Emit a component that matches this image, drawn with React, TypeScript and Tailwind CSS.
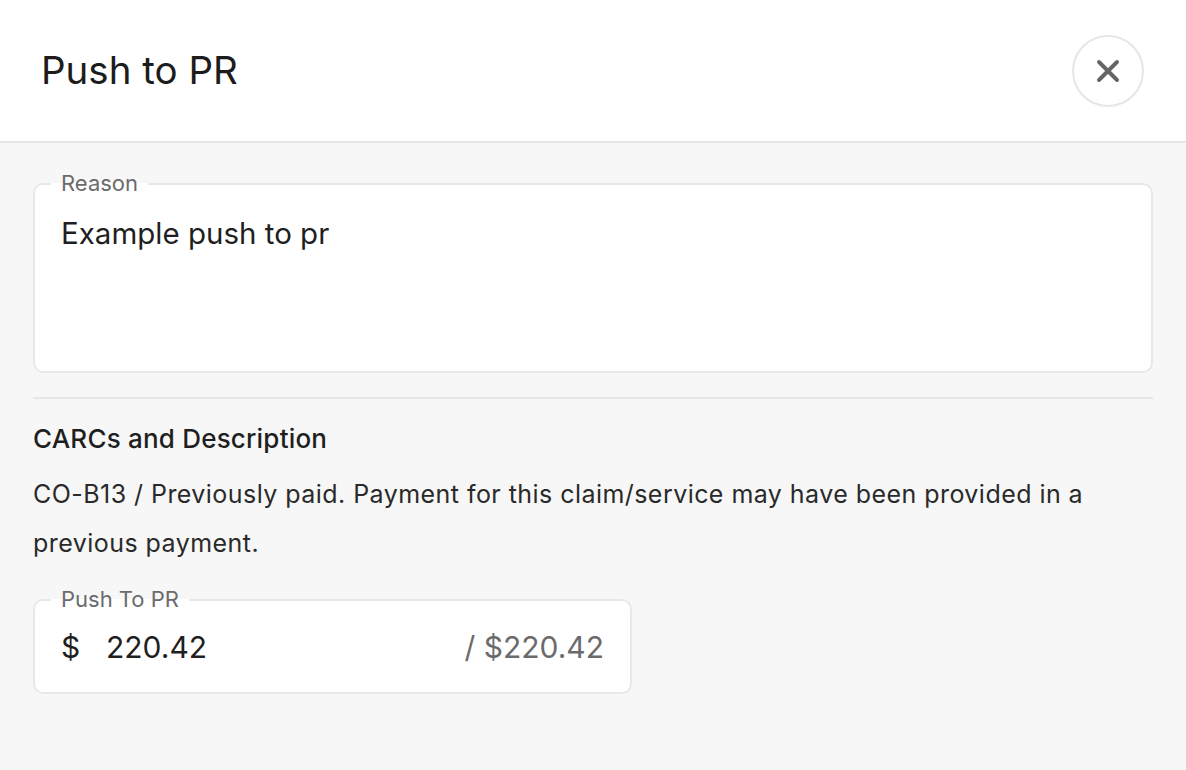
import { X } from 'lucide-react';

export default function App() {
  return (
    <div
      className="min-h-screen w-full bg-[#f7f7f7] text-[#1f1f1f]"
      style={{ fontFamily: 'Inter, "Noto Sans", sans-serif' }}
    >
      {/* Header */}
      <div className="h-[143px] bg-white border-b-2 border-[#e6e6e6] flex items-center justify-between pl-[41px] pr-[42px]">
        <h1 className="text-[38.5px] font-normal text-[#1c1c1c]">Push to PR</h1>
        <button className="w-[72px] h-[72px] rounded-full border-2 border-[#e6e6e6] flex items-center justify-center text-[#666666]">
          <X size={36} strokeWidth={2.6} />
        </button>
      </div>

      {/* Body */}
      <div className="px-[33px] pt-[24px]">
        <fieldset className="border-2 border-[#e8e8e8] rounded-[10px] bg-white h-[206px] px-[26px] pt-[13px]">
          <legend className="px-[10px] -ml-[10px] text-[22px] leading-[33px] text-[#6b6b6b]">Reason</legend>
          <div className="text-[29.5px] text-[#1f1f1f] leading-[40px]">Example push to pr</div>
        </fieldset>

        <div className="h-[2px] bg-[#e6e6e6] mt-[24px]" />

        <h2 className="mt-[24px] text-[26px] font-medium tracking-[0.2px] text-[#1f1f1f] leading-[32px]">
          CARCs and Description
        </h2>
        <p className="mt-[15px] text-[25px] tracking-[0.45px] text-[#2a2a2a] leading-[49px]">
          CO-B13 / Previously paid. Payment for this claim/service may have been provided in a previous payment.
        </p>

        <fieldset className="mt-[15px] w-[599px] h-[111px] border-2 border-[#e8e8e8] rounded-[10px] bg-white px-[26px] pt-[5px]">
          <legend className="px-[10px] -ml-[10px] text-[22px] leading-[33px] text-[#6b6b6b]">Push To PR</legend>
          <div className="flex items-center justify-between h-[52px] text-[30px]">
            <div className="flex items-center">
              <span className="text-[#1f1f1f] w-[45px]">$</span>
              <span className="text-[#1f1f1f]">220.42</span>
            </div>
            <span className="text-[#6b6b6b]">/ $220.42</span>
          </div>
        </fieldset>
      </div>
    </div>
  );
}
